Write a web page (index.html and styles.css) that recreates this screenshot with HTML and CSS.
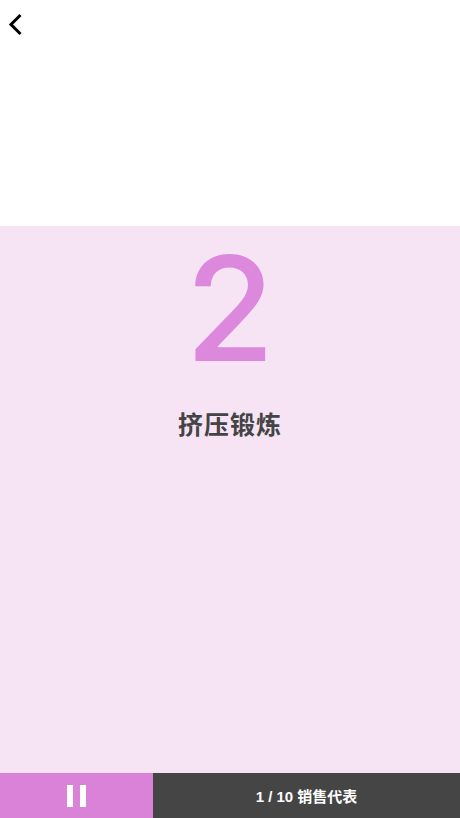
FILE: index.html
```html
<!DOCTYPE html>
<html lang="zh">
<head>
<meta charset="utf-8">
<link rel="stylesheet" href="styles.css">
</head>
<body>
<div class="app">
  <header class="top">
    <button class="back" aria-label="返回">
      <svg width="16" height="24" viewBox="0 0 16 24"><path d="M12.5 2 L3 11.5 L12.5 21" fill="none" stroke="#000" stroke-width="3" stroke-linecap="butt" stroke-linejoin="miter"/></svg>
    </button>
  </header>
  <main class="stage">
    <div class="count">2</div>
    <div class="name">挤压锻炼</div>
  </main>
  <footer class="bar">
    <button class="pause" aria-label="暂停">
      <span class="pbar"></span><span class="pbar"></span>
    </button>
    <div class="info">1 / 10 销售代表</div>
  </footer>
</div>
</body>
</html>
```
FILE: styles.css
```css
html, body { margin: 0; padding: 0; }
body { font-family: "Liberation Sans", "Noto Sans CJK SC", sans-serif; background: #fff; }
.app { width: 460px; height: 818px; display: flex; flex-direction: column; }
.top { height: 226px; background: #fff; }
.back { border: 0; background: none; padding: 0; margin: 13px 0 0 8px; display: block; width: 16px; height: 24px; }
.back svg { display: block; }
.stage { flex: 1; background: #f6e3f4; display: flex; flex-direction: column; align-items: center; }
.count { font-family: Inter, "Liberation Sans", sans-serif; font-weight: 450; font-size: 145px; line-height: 1; color: #dc88dc; margin-top: 10px; }
.name { margin-top: 26px; font-size: 25px; font-weight: 700; color: #444; font-family: "Noto Sans CJK SC", sans-serif; line-height: 32px; letter-spacing: 1px; }
.bar { height: 45px; display: flex; }
.pause { width: 153px; border: 0; padding: 0; background: #da82d8; display: flex; justify-content: center; align-items: center; gap: 7px; }
.pbar { width: 6px; height: 22px; background: #fff; display: block; }
.info { flex: 1; background: #454545; color: #fff; font-size: 15px; font-weight: 700; display: flex; justify-content: center; align-items: center; font-family: "Liberation Sans", "Noto Sans CJK SC", sans-serif; }
```
